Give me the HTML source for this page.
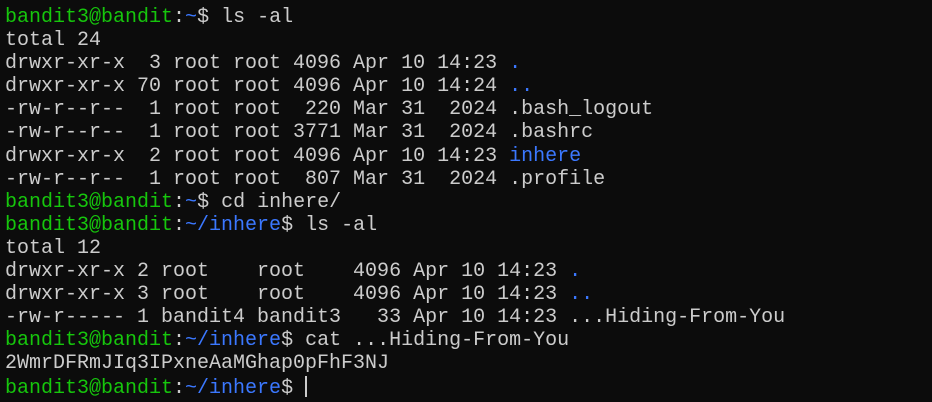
<!DOCTYPE html>
<html><head><style>
html,body{margin:0;background:#0c0c0c;width:932px;height:402px;overflow:hidden}
pre{margin:0;position:absolute;left:5px;top:6px;font-family:"Liberation Mono",monospace;font-size:20px;line-height:23.1px;color:#cccccc}
.g{color:#16c60c}.b{color:#3b78ff}
.cur{display:inline-block;width:2px;height:21px;background:#ccc;vertical-align:-4px}
</style></head><body><pre><span class="g">bandit3@bandit</span>:<span class="b">~</span>$ ls -al
total 24
drwxr-xr-x  3 root root 4096 Apr 10 14:23 <span class="b">.</span>
drwxr-xr-x 70 root root 4096 Apr 10 14:24 <span class="b">..</span>
-rw-r--r--  1 root root  220 Mar 31  2024 .bash_logout
-rw-r--r--  1 root root 3771 Mar 31  2024 .bashrc
drwxr-xr-x  2 root root 4096 Apr 10 14:23 <span class="b">inhere</span>
-rw-r--r--  1 root root  807 Mar 31  2024 .profile
<span class="g">bandit3@bandit</span>:<span class="b">~</span>$ cd inhere/
<span class="g">bandit3@bandit</span>:<span class="b">~/inhere</span>$ ls -al
total 12
drwxr-xr-x 2 root    root    4096 Apr 10 14:23 <span class="b">.</span>
drwxr-xr-x 3 root    root    4096 Apr 10 14:23 <span class="b">..</span>
-rw-r----- 1 bandit4 bandit3   33 Apr 10 14:23 ...Hiding-From-You
<span class="g">bandit3@bandit</span>:<span class="b">~/inhere</span>$ cat ...Hiding-From-You
2WmrDFRmJIq3IPxneAaMGhap0pFhF3NJ
<span class="g">bandit3@bandit</span>:<span class="b">~/inhere</span>$ <span class="cur"></span></pre></body></html>
